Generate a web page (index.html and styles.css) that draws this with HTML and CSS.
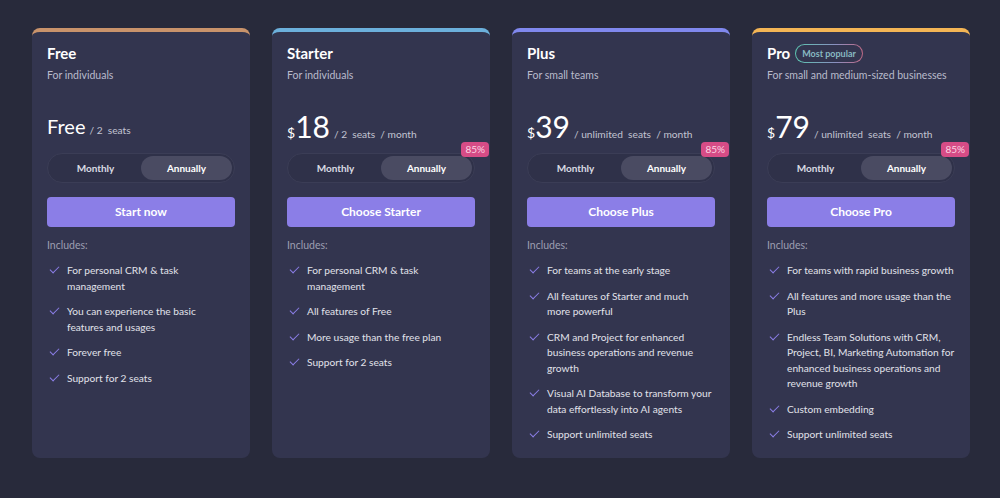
FILE: index.html
```html
<!DOCTYPE html>
<html>
	<head>
		<meta charset="UTF-8">
		<title>Pricing</title>
		<link rel="stylesheet" href="styles.css">
	</head>
	<body>
		<div class="plans">

			<div class="card free">
				<h2 class="name">Free</h2>
				<p class="desc">For individuals</p>
				<div class="price">
					<span class="amount small">Free</span>
					<span class="unit">/ 2 &nbsp;seats</span>
				</div>
				<div class="toggle">
					<span>Monthly</span>
					<span class="on">Annually</span>
				</div>
				<a class="btn">Start now</a>
				<p class="inc">Includes:</p>
				<ul class="feats">
					<li>For personal CRM &amp; task management</li>
					<li>You can experience the basic<br>features and usages</li>
					<li>Forever free</li>
					<li>Support for 2 seats</li>
				</ul>
			</div>

			<div class="card starter">
				<h2 class="name">Starter</h2>
				<p class="desc">For individuals</p>
				<div class="price">
					<span class="cur">$</span><span class="amount">18</span>
					<span class="unit">/ 2 &nbsp;seats &nbsp;/ month</span>
				</div>
				<div class="toggle">
					<span>Monthly</span>
					<span class="on">Annually</span>
					<i class="off">85%</i>
				</div>
				<a class="btn">Choose Starter</a>
				<p class="inc">Includes:</p>
				<ul class="feats">
					<li>For personal CRM &amp; task management</li>
					<li>All features of Free</li>
					<li>More usage than the free plan</li>
					<li>Support for 2 seats</li>
				</ul>
			</div>

			<div class="card plus">
				<h2 class="name">Plus</h2>
				<p class="desc">For small teams</p>
				<div class="price">
					<span class="cur">$</span><span class="amount">39</span>
					<span class="unit">/ unlimited &nbsp;seats &nbsp;/ month</span>
				</div>
				<div class="toggle">
					<span>Monthly</span>
					<span class="on">Annually</span>
					<i class="off">85%</i>
				</div>
				<a class="btn">Choose Plus</a>
				<p class="inc">Includes:</p>
				<ul class="feats">
					<li>For teams at the early stage</li>
					<li>All features of Starter and much<br>more powerful</li>
					<li>CRM and Project for enhanced business operations and revenue growth</li>
					<li>Visual AI Database to transform your data effortlessly into AI agents</li>
					<li>Support unlimited seats</li>
				</ul>
			</div>

			<div class="card pro">
				<h2 class="name">Pro <span class="pop"><b>Most popular</b></span></h2>
				<p class="desc">For small and medium-sized businesses</p>
				<div class="price">
					<span class="cur">$</span><span class="amount">79</span>
					<span class="unit">/ unlimited &nbsp;seats &nbsp;/ month</span>
				</div>
				<div class="toggle">
					<span>Monthly</span>
					<span class="on">Annually</span>
					<i class="off">85%</i>
				</div>
				<a class="btn">Choose Pro</a>
				<p class="inc">Includes:</p>
				<ul class="feats">
					<li>For teams with rapid business growth</li>
					<li>All features and more usage than the Plus</li>
					<li>Endless Team Solutions with CRM, Project, BI, Marketing Automation for enhanced business operations and revenue growth</li>
					<li>Custom embedding</li>
					<li>Support unlimited seats</li>
				</ul>
			</div>

		</div>
	</body>
</html>
```

FILE: styles.css
```css
* {
	margin: 0;
	padding: 0;
	box-sizing: border-box;
}

body {
	background-color: #282a3b;
	font-family: Lato, "Noto Sans", sans-serif;
	color: #e3e4ec;
}

.plans {
	display: flex;
	gap: 22px;
	padding: 28px 0 0 32px;
}

.card {
	width: 218px;
	height: 430px;
	background-color: #33354f;
	border-radius: 8px;
	border-top: 4px solid #c9936b;
	padding: 11px 15px 0 15px;
	display: flex;
	flex-direction: column;
}

.starter { border-top-color: #6cb0dc; }
.plus { border-top-color: #8088ee; }
.pro { border-top-color: #f4b555; }

.name {
	height: 20px;
	font-size: 15px;
	line-height: 20px;
	font-weight: 700;
	color: #fff;
	display: flex;
	align-items: center;
	gap: 5px;
}

.pop {
	display: inline-block;
	padding: 1px;
	border-radius: 10px;
	background: linear-gradient(90deg, #5cc6b0, #8a8fc0 60%, #c06a86);
}

.pop b {
	display: block;
	padding: 0 6px;
	border-radius: 9px;
	background-color: #33354f;
	font-size: 9px;
	line-height: 17px;
	font-weight: 700;
	color: #88b9c2;
}

.desc {
	margin-top: 4px;
	font-size: 10.5px;
	line-height: 16px;
	color: #b9bbcc;
}

.price {
	margin-top: 25px;
	height: 36px;
	display: flex;
	align-items: baseline;
	white-space: nowrap;
}

.cur {
	font-size: 14px;
	color: #fff;
}

.amount {
	font-size: 30px;
	line-height: 36px;
	font-weight: 400;
	color: #fff;
}

.amount.small {
	font-size: 20px;
}

.unit {
	margin-left: 4px;
	font-size: 10.2px;
	color: #c2c4d2;
}

.toggle {
	position: relative;
	margin-top: 9px;
	height: 30px;
	border-radius: 15px;
	border: 1px solid #3b3d56;
	background-color: #2f3149;
	padding: 2px;
	display: flex;
}

.toggle span {
	flex: 1;
	border-radius: 12px;
	font-size: 10px;
	font-weight: 700;
	line-height: 24px;
	text-align: center;
	color: #d9dae3;
}

.toggle .on {
	background-color: #4a4b62;
	color: #fff;
}

.off {
	position: absolute;
	top: -12px;
	right: -15px;
	font-style: normal;
	font-size: 10px;
	line-height: 15px;
	padding: 0 4px;
	border-radius: 4px;
	background-color: #d64c86;
	color: #fbd6e4;
}

.btn {
	margin-top: 14px;
	height: 30px;
	border-radius: 4px;
	background-color: #8b7ee7;
	color: #fff;
	font-size: 12px;
	font-weight: 700;
	line-height: 30px;
	text-align: center;
}

.inc {
	margin-top: 10px;
	font-size: 10.5px;
	line-height: 16px;
	color: #9d9fb1;
}

.feats {
	list-style: none;
	margin-top: 10px;
	display: flex;
	flex-direction: column;
	gap: 10px;
}

.feats li {
	position: relative;
	padding-left: 20px;
	font-size: 10.2px;
	line-height: 15.5px;
	color: #e1e2ea;
}

.feats li::before {
	content: "";
	position: absolute;
	left: 3px;
	top: 3px;
	width: 8px;
	height: 4px;
	border-left: 1.3px solid #8b7ee7;
	border-bottom: 1.3px solid #8b7ee7;
	transform: rotate(-45deg);
}
```
